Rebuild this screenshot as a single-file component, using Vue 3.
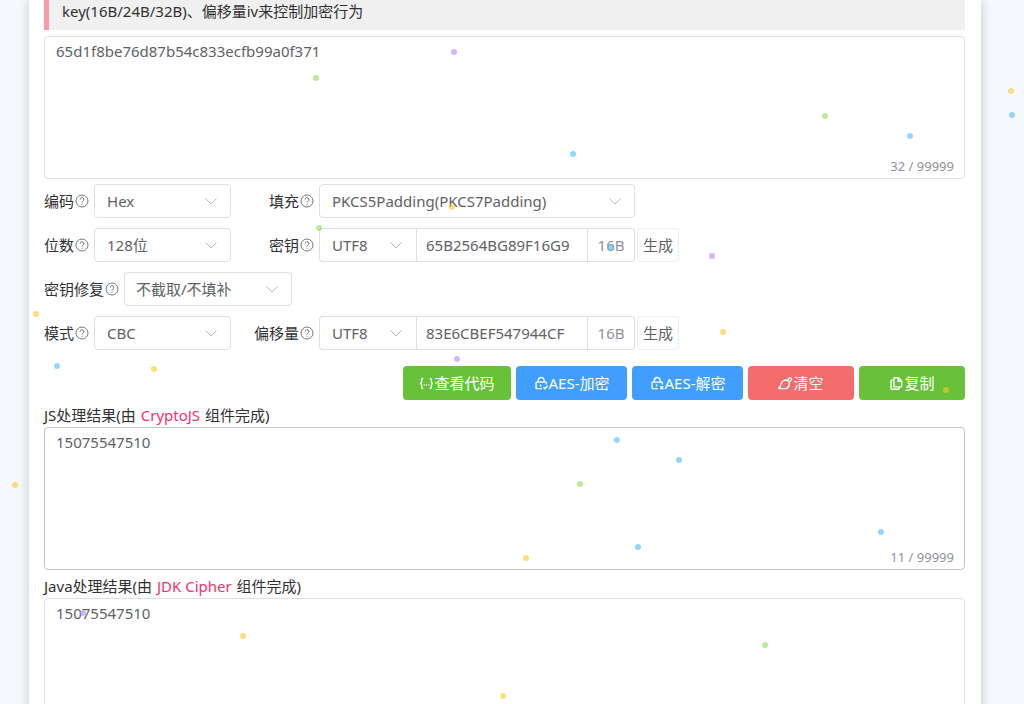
<script setup>
import { ref } from 'vue'

const source = ref('65d1f8be76d87b54c833ecfb99a0f371')
const jsResult = ref('15075547510')
const javaResult = ref('15075547510')
const key = ref('65B2564BG89F16G9')
const iv = ref('83E6CBEF547944CF')

const dots = [
  [454, 52, 'purple'], [316, 78, 'green'], [825, 116, 'green'], [910, 136, 'blue'],
  [573, 154, 'blue'], [1011, 91, 'yellow'], [1012, 115, 'blue'], [452, 207, 'yellow'],
  [319, 228, 'green'], [611, 247, 'blue'], [712, 256, 'purple'], [36, 314, 'yellow'],
  [723, 332, 'yellow'], [57, 366, 'blue'], [154, 369, 'yellow'], [457, 359, 'purple'],
  [946, 390, 'yellow'], [617, 440, 'blue'], [679, 460, 'blue'], [580, 484, 'green'],
  [15, 485, 'yellow'], [881, 532, 'blue'], [638, 547, 'blue'], [526, 558, 'yellow'],
  [83, 613, 'purple'], [243, 636, 'yellow'], [765, 645, 'green'], [503, 696, 'yellow']
]
</script>

<template>
  <div class="page">
    <main class="card">
      <blockquote class="quote">key(16B/24B/32B)、偏移量iv来控制加密行为</blockquote>

      <div class="area">
        <textarea v-model="source" aria-label="待处理内容" spellcheck="false"></textarea>
        <span class="count">{{ source.length }} / 99999</span>
      </div>

      <form class="options" @submit.prevent>
        <div class="row">
          <div class="item">
            <label for="encoding">编码<svg class="help" viewBox="0 0 14 14"><circle cx="7" cy="7" r="6" /><path d="M5.1 5.6a1.9 1.9 0 1 1 2.7 1.7c-.6.3-.8.6-.8 1.3M7 9.8v1" /></svg></label>
            <span class="pick"><select id="encoding"><option>Hex</option></select><svg viewBox="0 0 12 12"><path d="M.5 3.5 6 9l5.500-5.500" /></svg></span>
          </div>
          <div class="item second">
            <label for="padding">填充<svg class="help" viewBox="0 0 14 14"><circle cx="7" cy="7" r="6" /><path d="M5.1 5.6a1.9 1.9 0 1 1 2.7 1.7c-.6.3-.8.6-.8 1.3M7 9.8v1" /></svg></label>
            <span class="pick wide"><select id="padding"><option>PKCS5Padding(PKCS7Padding)</option></select><svg viewBox="0 0 12 12"><path d="M.5 3.5 6 9l5.500-5.500" /></svg></span>
          </div>
        </div>

        <div class="row">
          <div class="item">
            <label for="bits">位数<svg class="help" viewBox="0 0 14 14"><circle cx="7" cy="7" r="6" /><path d="M5.1 5.6a1.9 1.9 0 1 1 2.7 1.7c-.6.3-.8.6-.8 1.3M7 9.8v1" /></svg></label>
            <span class="pick"><select id="bits"><option>128位</option></select><svg viewBox="0 0 12 12"><path d="M.5 3.500 6 9l5.500-5.500" /></svg></span>
          </div>
          <div class="item second">
            <label for="key">密钥<svg class="help" viewBox="0 0 14 14"><circle cx="7" cy="7" r="6" /><path d="M5.1 5.6a1.9 1.9 0 1 1 2.7 1.7c-.6.3-.8.6-.8 1.3M7 9.8v1" /></svg></label>
            <span class="combo">
              <span class="pick charset"><select aria-label="密钥字符集"><option>UTF8</option></select><svg viewBox="0 0 12 12"><path d="M.5 3.500 6 9l5.500-5.500" /></svg></span>
              <input id="key" v-model="key" type="text" />
              <span class="suffix">{{ key.length }}B</span>
            </span>
            <button class="make" type="button">生成</button>
          </div>
        </div>

        <div class="row">
          <div class="item">
            <label for="repair">密钥修复<svg class="help" viewBox="0 0 14 14"><circle cx="7" cy="7" r="6" /><path d="M5.1 5.6a1.9 1.9 0 1 1 2.7 1.7c-.6.3-.8.6-.8 1.3M7 9.8v1" /></svg></label>
            <span class="pick repair"><select id="repair"><option>不截取/不填补</option></select><svg viewBox="0 0 12 12"><path d="M.5 3.500 6 9l5.500-5.500" /></svg></span>
          </div>
        </div>

        <div class="row">
          <div class="item">
            <label for="mode">模式<svg class="help" viewBox="0 0 14 14"><circle cx="7" cy="7" r="6" /><path d="M5.1 5.6a1.9 1.9 0 1 1 2.7 1.7c-.6.3-.8.6-.8 1.3M7 9.8v1" /></svg></label>
            <span class="pick"><select id="mode"><option>CBC</option></select><svg viewBox="0 0 12 12"><path d="M.5 3.500 6 9l5.500-5.500" /></svg></span>
          </div>
          <div class="item second">
            <label for="iv">偏移量<svg class="help" viewBox="0 0 14 14"><circle cx="7" cy="7" r="6" /><path d="M5.1 5.6a1.9 1.9 0 1 1 2.7 1.7c-.6.3-.8.6-.8 1.3M7 9.8v1" /></svg></label>
            <span class="combo">
              <span class="pick charset"><select aria-label="偏移量字符集"><option>UTF8</option></select><svg viewBox="0 0 12 12"><path d="M.5 3.500 6 9l5.500-5.500" /></svg></span>
              <input id="iv" v-model="iv" type="text" />
              <span class="suffix">{{ iv.length }}B</span>
            </span>
            <button class="make" type="button">生成</button>
          </div>
        </div>
      </form>

      <div class="actions">
        <button type="button" class="green code">
          <svg viewBox="0 0 16 16"><path d="M4.500 2.500c-1.500 0-1.700.6-1.700 1.800v1.900c0 1-.4 1.600-1.500 1.800 1.100.2 1.500.8 1.500 1.800v1.900c0 1.200.2 1.800 1.700 1.800M11.500 2.500c1.500 0 1.700.6 1.700 1.800v1.900c0 1 .4 1.600 1.500 1.800-1.100.2-1.500.8-1.500 1.800v1.900c0 1.200-.2 1.800-1.700 1.800M5 9.500h1.200M7.400 9.500h1.200M9.800 9.500H11" /></svg>查看代码
        </button>
        <button type="button" class="blue">
          <svg viewBox="0 0 16 16"><path d="M8.500 13.500H3c-.5 0-.8-.3-.8-.8V7.300c0-.5.3-.8.8-.8h9.400c.5 0 .8.300.8.8v1.700M4.600 6.500V4.700a3.100 3.100 0 0 1 6.200 0v1.800M7 9v2.200M10 12l1.500 1.500 3-3.200" /></svg>AES-加密
        </button>
        <button type="button" class="blue">
          <svg viewBox="0 0 16 16"><path d="M8.500 13.500H3c-.5 0-.8-.3-.8-.8V7.300c0-.5.3-.8.8-.8h9.400c.5 0 .8.300.8.8v1.700M4.600 6.500V4.700a3.100 3.100 0 0 1 6.200 0v1.800M7 9v2.200M11 11l3.200 3.200M14.200 11 11 14.200" /></svg>AES-解密
        </button>
        <button type="button" class="red">
          <svg viewBox="0 0 16 16"><path d="M9.800 4.800l1.800-2.300c.6-.7 1.500-.8 2.200-.3.700.6.8 1.500.2 2.200l-2 2.400M6 5c2.500-1.400 5.400-.4 6 2 .3 3-1.300 5.700-3.200 6.500H4.600c-1.300 0-2.500-.1-3.800-.7C2.500 12 2.700 11 3 9.200 3.500 7 4.500 5.700 6 5" /></svg>清空
        </button>
        <button type="button" class="green">
          <svg viewBox="0 0 16 16"><path d="M6 1.800h4l3.500 3.500v5.500c0 .5-.3.8-.8.8H6c-.5 0-.8-.3-.8-.8V2.600c0-.5.3-.8.8-.8M9.800 2v3.600h3.700M5 4.400H3c-.5 0-.8.3-.8.8v8.200c0 .5.3.8.8.8h7c.5 0 .8-.3.8-.8v-1.600" /></svg>复制
        </button>
      </div>

      <label class="title" for="js">JS处理结果(由 <em>CryptoJS</em> 组件完成)</label>
      <div class="area hovered">
        <textarea id="js" v-model="jsResult" spellcheck="false"></textarea>
        <span class="count">{{ jsResult.length }} / 99999</span>
      </div>

      <label class="title" for="java">Java处理结果(由 <em>JDK Cipher</em> 组件完成)</label>
      <div class="area">
        <textarea id="java" v-model="javaResult" spellcheck="false"></textarea>
      </div>
    </main>

    <i v-for="(d, i) in dots" :key="i" class="dot" :class="d[2]" :style="{ left: d[0] - 3 + 'px', top: d[1] - 3 + 'px' }"></i>
  </div>
</template>

<style>
body {
  margin: 0;
  background: #f6faff;
}
</style>

<style scoped>
* {
  box-sizing: border-box;
}
.page {
  position: relative;
  height: 100vh;
  overflow: hidden;
  padding: 0 43px 0 29px;
  background: #f6faff;
  color: #303133;
  font-family: "Noto Sans", "Noto Sans CJK SC", sans-serif;
  font-size: 15px;
  line-height: 21px;
}
.card {
  min-height: 100%;
  padding: 0 16px 16px 15px;
  background: #fff;
  box-shadow: 0 0 12px rgba(0, 0, 0, 0.2);
}
.quote {
  margin: 0 0 6px;
  padding: 1px 13px 8px;
  border-left: 5px solid #fb98a6;
  background: #f0f0f0;
}
button,
input,
select,
textarea {
  margin: 0;
  font: inherit;
  color: #606266;
}
.area {
  position: relative;
  margin-bottom: 1px;
}
textarea {
  display: block;
  width: 100%;
  height: 143px;
  padding: 4px 11px;
  border: 1px solid #dcdfe6;
  border-radius: 4px;
  background: #fff;
  resize: none;
  outline: 0;
}
.hovered textarea {
  border-color: #c0c4cc;
}
.count {
  position: absolute;
  right: 11px;
  bottom: 2px;
  color: #909399;
  font-size: 13px;
}
.options {
  display: flex;
  flex-direction: column;
  gap: 10px;
  margin-top: 5px;
}
.row,
.item,
.item label {
  display: flex;
  align-items: center;
}
.item {
  gap: 5px;
}
.item label {
  gap: 1px;
  white-space: nowrap;
}
.second label {
  width: 83px;
  justify-content: flex-end;
}
svg {
  flex: none;
  fill: none;
  stroke: currentColor;
}
.help {
  width: 14px;
  height: 14px;
  color: #73767a;
}
.pick {
  position: relative;
  display: block;
  width: 137px;
}
.pick svg {
  position: absolute;
  right: 14px;
  top: 11px;
  width: 12px;
  height: 12px;
  color: #b4b8c0;
  pointer-events: none;
}
select {
  display: block;
  appearance: none;
  width: 100%;
  height: 34px;
  padding: 0 32px 0 12px;
  border: 1px solid #dcdfe6;
  border-radius: 4px;
  background: #fff;
}
.wide {
  width: 316px;
}
.repair {
  width: 168px;
}
.repair select {
  padding-left: 11px;
}
.combo {
  display: flex;
  width: 316px;
}
.charset {
  width: 97px;
}
.charset select {
  border-right: 0;
  border-radius: 4px 0 0 4px;
}
input {
  flex: 1;
  min-width: 0;
  height: 34px;
  padding: 0 9px;
  border: 1px solid #dcdfe6;
  outline: 0;
}
.suffix {
  display: flex;
  align-items: center;
  justify-content: center;
  width: 47px;
  border: 1px solid #dcdfe6;
  border-left: 0;
  border-radius: 0 4px 4px 0;
  color: #909399;
}
.make {
  height: 34px;
  margin-left: -3px;
  padding: 0 5px;
  border: 1px solid #ebeef5;
  border-radius: 4px;
  background: #fff;
}
.actions {
  display: flex;
  justify-content: flex-end;
  gap: 5px;
  margin-top: 16px;
}
.actions button {
  display: flex;
  align-items: center;
  justify-content: center;
  height: 34px;
  min-width: 106px;
  padding: 0 16px;
  border: 0;
  border-radius: 4px;
  color: #fff;
}
.actions svg {
  width: 15px;
  height: 15px;
  stroke-width: 1.5;
}
.actions .code {
  min-width: 108px;
}
.actions .green {
  background: #67c23a;
}
.actions .blue {
  min-width: 111px;
  background: #409eff;
}
.actions .red {
  background: #f56c6c;
}
.title {
  display: block;
  padding: 5px 0 1px;
}
.title em {
  padding: 0 1px;
  color: #fb2f72;
  font-style: normal;
}
.dot {
  position: absolute;
  width: 6px;
  height: 6px;
  border-radius: 50%;
  opacity: 0.6;
  pointer-events: none;
}
.dot.yellow {
  background: #fcc826;
}
.dot.green {
  background: #93dc50;
}
.dot.blue {
  background: #4dbcfb;
}
.dot.purple {
  background: #b585fc;
}
</style>
